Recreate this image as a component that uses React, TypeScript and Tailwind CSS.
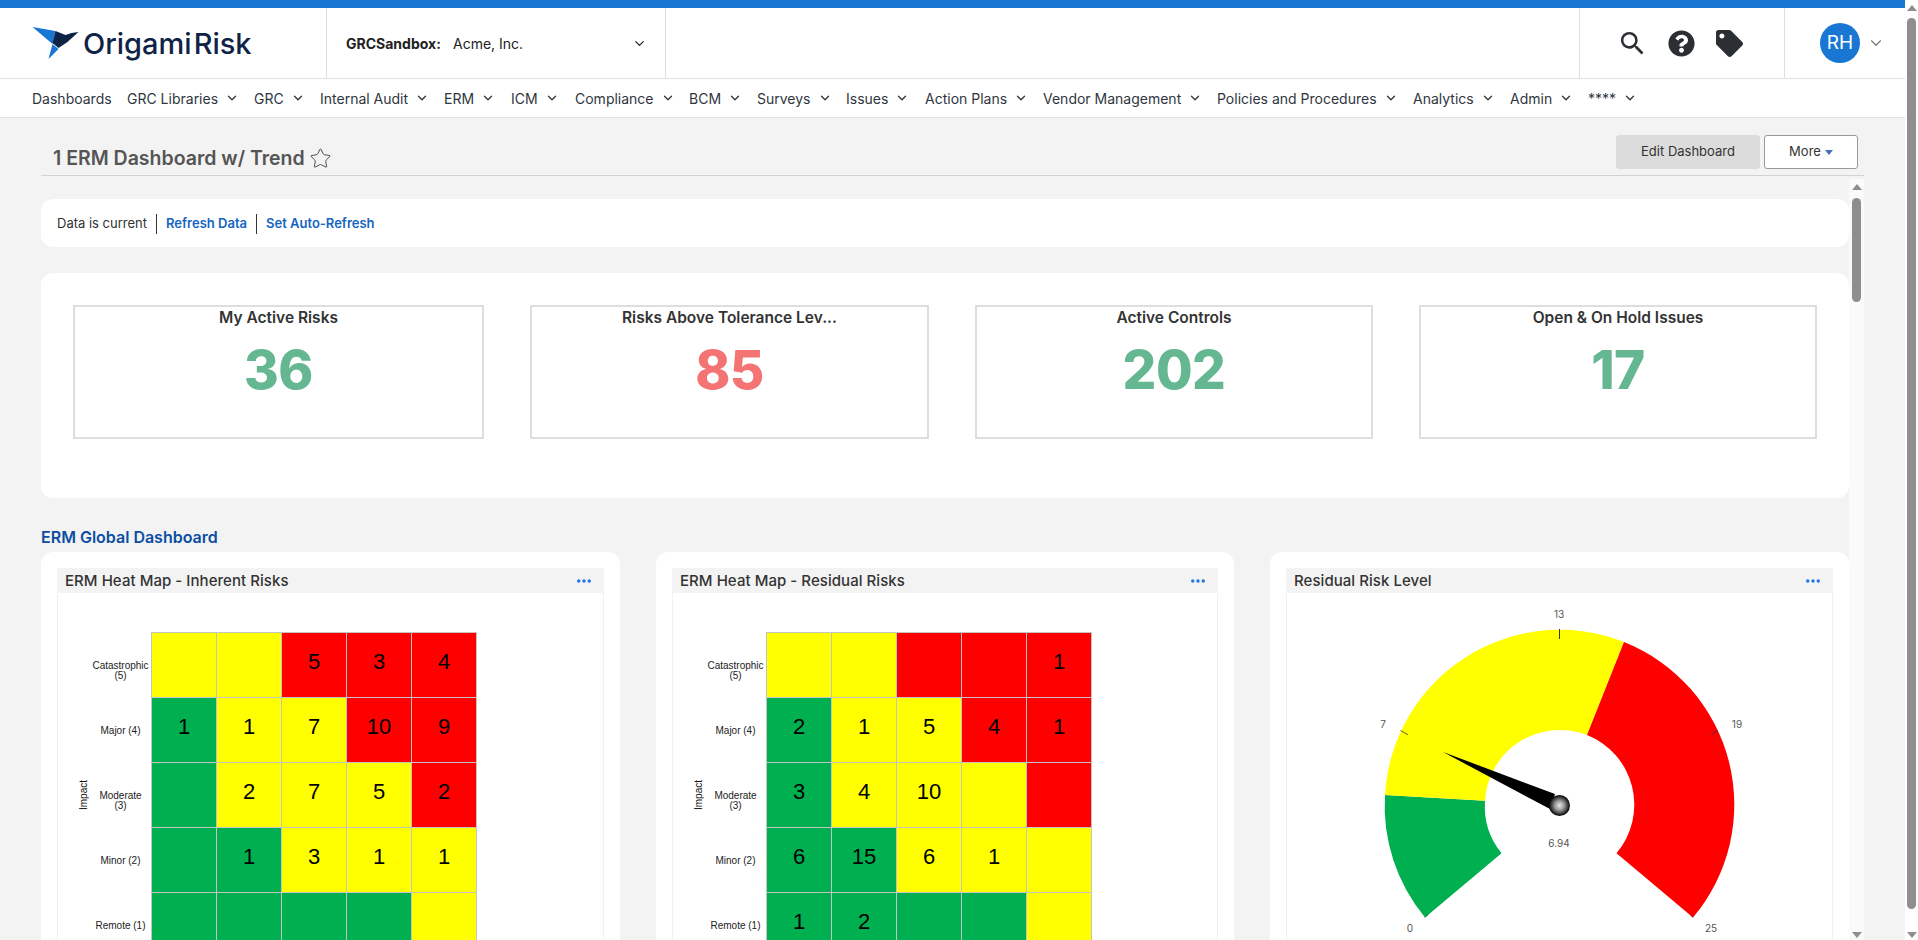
import React from 'react';
import { ChevronDown, Ellipsis, Star } from 'lucide-react';
import { FaQuestionCircle, FaTag } from 'react-icons/fa';
import { MdSearch } from 'react-icons/md';

const FONT = { fontFamily: 'Inter, "Liberation Sans", sans-serif' };
const ARIAL = { fontFamily: '"Liberation Sans", Arial, sans-serif' };

const navItems = [
  { label: 'Dashboards', w: 95, menu: false },
  { label: 'GRC Libraries', w: 127 },
  { label: 'GRC', w: 66 },
  { label: 'Internal Audit', w: 124 },
  { label: 'ERM', w: 67 },
  { label: 'ICM', w: 64 },
  { label: 'Compliance', w: 114 },
  { label: 'BCM', w: 68 },
  { label: 'Surveys', w: 89 },
  { label: 'Issues', w: 79 },
  { label: 'Action Plans', w: 118 },
  { label: 'Vendor Management', w: 174 },
  { label: 'Policies and Procedures', w: 196 },
  { label: 'Analytics', w: 97 },
  { label: 'Admin', w: 78 },
  { label: '****', w: 60 },
];

const kpis = [
  { title: 'My Active Risks', value: '36', color: 'text-[#64b791]' },
  { title: 'Risks Above Tolerance Lev...', value: '85', color: 'text-[#f47474]' },
  { title: 'Active Controls', value: '202', color: 'text-[#64b791]' },
  { title: 'Open & On Hold Issues', value: '17', color: 'text-[#64b791]' },
];

const rowLabels = [
  ['Catastrophic', '(5)'],
  ['Major (4)'],
  ['Moderate', '(3)'],
  ['Minor (2)'],
  ['Remote (1)'],
];

const cellColors = [
  ['y', 'y', 'r', 'r', 'r'],
  ['g', 'y', 'y', 'r', 'r'],
  ['g', 'y', 'y', 'y', 'r'],
  ['g', 'g', 'y', 'y', 'y'],
  ['g', 'g', 'g', 'g', 'y'],
];

const colorClass: Record<string, string> = {
  y: 'bg-[#ffff00]',
  r: 'bg-[#ff0000]',
  g: 'bg-[#00b050]',
};

const inherent = [
  ['', '', '5', '3', '4'],
  ['1', '1', '7', '10', '9'],
  ['', '2', '7', '5', '2'],
  ['', '1', '3', '1', '1'],
  ['', '', '', '', ''],
];

const residual = [
  ['', '', '', '', '1'],
  ['2', '1', '5', '4', '1'],
  ['3', '4', '10', '', ''],
  ['6', '15', '6', '1', ''],
  ['1', '2', '', '', ''],
];

const Arrow = ({ down }: { down?: boolean }) => (
  <svg width="10" height="6" viewBox="0 0 10 6" className="block shrink-0">
    <polygon points={down ? '0,0 10,0 5,6' : '0,6 10,6 5,0'} fill="#8e8e8e" />
  </svg>
);

const Logo = () => (
  <div className="flex items-center">
    <svg width="48" height="32" viewBox="32 27 47 32" className="shrink-0">
      <polygon points="32,27 55,31 52,44" fill="#1976d2" />
      <polygon points="52,44 58,49 48,59" fill="#1976d2" />
      <polygon points="55,31 65,35 71,33 78,32 67,42 58,48 52,43" fill="#0f2346" />
    </svg>
    <span className="ml-[3px] text-[29px] font-medium leading-none text-[#0f2346]">
      Origami<span className="ml-[2px]">Risk</span>
    </span>
  </div>
);

const Header = () => (
  <div className="flex h-[71px] shrink-0 border-b border-[#e2e2e2] bg-white">
    <div className="flex w-[327px] items-center border-r border-[#dedede] pl-[32px]">
      <Logo />
    </div>
    <div className="flex w-[339px] items-center border-r border-[#dedede] pl-[19px] text-[14px] text-[#222]">
      <span className="w-[107px] font-bold">GRCSandbox:</span>
      <span>Acme, Inc.</span>
      <ChevronDown size={15} className="ml-auto mr-[18px]" />
    </div>
    <div className="flex-1" />
    <div className="flex w-[206px] items-center border-l border-r border-[#dedede] pl-[37px] text-[#2b2e33]">
      <MdSearch size={31} />
      <FaQuestionCircle size={27} className="ml-[20px]" />
      <FaTag size={27} className="ml-[21px]" />
    </div>
    <div className="flex w-[120px] items-center pl-[35px]">
      <div className="flex h-[40px] w-[40px] items-center justify-center rounded-full bg-[#1976d2] text-[19px] text-white">
        RH
      </div>
      <ChevronDown size={18} strokeWidth={1.5} className="ml-[7px] text-[#777]" />
    </div>
  </div>
);

const Nav = () => (
  <div className="flex h-[39px] shrink-0 items-center border-b border-[#e2e2e2] bg-white pl-[32px] text-[14px] text-[#2f3640]">
    {navItems.map((item) => (
      <div key={item.label} className="flex shrink-0 items-center" style={{ width: item.w }}>
        <span>{item.label}</span>
        {item.menu !== false && <ChevronDown size={14} strokeWidth={2.2} className="ml-[7px] text-[#333]" />}
      </div>
    ))}
  </div>
);

const TitleRow = () => (
  <div className="ml-[41px] mr-[41px] flex h-[58px] shrink-0 justify-between border-b border-[#d2d2d2] pl-[12px] pr-[6px]">
    <div className="flex items-start pt-[27px]">
      <span className="text-[19.5px] font-semibold leading-[26px] text-[#555]">1 ERM Dashboard w/ Trend</span>
      <Star size={23} strokeWidth={1} className="ml-[4px] mt-[2px] text-[#444]" />
    </div>
    <div className="flex items-start gap-[4px] pt-[17px] text-[13px] text-[#333]">
      <button className="h-[34px] w-[144px] rounded-[3px] bg-[#dcdcdc]">Edit Dashboard</button>
      <button className="flex h-[34px] w-[94px] items-center justify-center gap-[4px] rounded-[3px] border border-[#999] bg-white">
        More
        <svg width="8" height="5" viewBox="0 0 8 5">
          <polygon points="0,0 8,0 4,5" fill="#3f73b5" />
        </svg>
      </button>
    </div>
  </div>
);

const StatusCard = () => (
  <div className="flex h-[48px] items-center rounded-xl bg-white pl-[16px] pt-[2px] text-[13px]">
    <span className="text-[#333]">Data is current</span>
    <span className="mx-[9px] h-[20px] w-px bg-[#333]" />
    <span className="font-semibold text-[#1565c0]">Refresh Data</span>
    <span className="mx-[9px] h-[20px] w-px bg-[#333]" />
    <span className="font-semibold text-[#1565c0]">Set Auto-Refresh</span>
  </div>
);

const KpiCard = () => (
  <div className="mt-[26px] h-[225px] rounded-xl bg-white pl-[32px] pt-[32px]">
    <div className="grid grid-cols-[411px_399px_398px_398px] gap-[46px]">
      {kpis.map((k) => (
        <div key={k.title} className="h-[134px] border-2 border-[#dedede] text-center">
          <div className="pt-[1px] text-[15.5px] font-semibold leading-[20px] text-[#333]">{k.title}</div>
          <div className={`mt-[7px] text-[53px] font-extrabold leading-[70px] tracking-[-0.5px] ${k.color}`}>{k.value}</div>
        </div>
      ))}
    </div>
  </div>
);

const Panel = ({ title, children }: { title: string; children: React.ReactNode }) => (
  <div className="h-[500px] rounded-xl bg-white px-[16px] pt-[16px]">
    <div className="flex h-[25px] items-center justify-between bg-[#f3f3f3] pl-[8px] pr-[11px] pt-[1px]">
      <span className="text-[15px] font-medium tracking-[0.05px] text-[#333]">{title}</span>
      <Ellipsis size={18} strokeWidth={2.6} className="text-[#1a73e8]" />
    </div>
    <div className="h-[460px] border-x border-[#f0f0f0]">{children}</div>
  </div>
);

const HeatMap = ({ data }: { data: string[][] }) => (
  <div className="flex pl-[20px] pt-[39px]" style={ARIAL}>
    <div className="flex w-[12px] items-center justify-center">
      <span className="rotate-180 text-[10px] leading-[12px] text-[#111] [writing-mode:vertical-rl]">Impact</span>
    </div>
    <div className="w-[61px]">
      {rowLabels.map((lines) => (
        <div key={lines[0]} className="flex h-[65px] flex-col items-center pt-[29px] text-[10px] leading-[10px] text-[#222]">
          {lines.map((l) => (
            <span key={l}>{l}</span>
          ))}
        </div>
      ))}
    </div>
    <div className="grid grid-cols-[repeat(5,65px)] border-l border-t border-[#c4c4c4]">
      {data.map((row, r) =>
        row.map((v, c) => (
          <div
            key={`${r}-${c}`}
            className={`flex h-[65px] items-center justify-center border-b border-r border-[#c4c4c4] pb-[7px] text-[22px] text-black ${colorClass[cellColors[r][c]]}`}
          >
            {v}
          </div>
        )),
      )}
    </div>
  </div>
);

const Gauge = () => (
  <svg width="545" height="347" viewBox="1287 593 545 347" className="block">
    <defs>
      <radialGradient id="hub">
        <stop offset="0%" stopColor="#e8e8e8" />
        <stop offset="45%" stopColor="#999" />
        <stop offset="100%" stopColor="#000" />
      </radialGradient>
    </defs>
    <path d="M1425 917.5 A175 175 0 0 1 1385 795 L1485 800.7 A75 75 0 0 0 1501.5 853.2 Z" fill="#00b050" />
    <path d="M1385 795 A175 175 0 0 1 1624 642 L1587 735 A75 75 0 0 0 1485 800.7 Z" fill="#ffff00" />
    <path d="M1624 642 A175 175 0 0 1 1693 917.5 L1616.5 853.2 A75 75 0 0 0 1587 735 Z" fill="#ff0000" />
    <g stroke="#333" strokeWidth="0.8">
      <line x1="1559.5" y1="629" x2="1559.5" y2="639" stroke="#000" />
      <line x1="1400.5" y1="730.5" x2="1408" y2="734.7" />
      <line x1="1718" y1="730.5" x2="1711" y2="734.7" />
      <line x1="1425" y1="917.5" x2="1428" y2="914.5" />
      <line x1="1693" y1="917.5" x2="1690" y2="914.5" />
    </g>
    <polygon points="1443,752 1555,794 1550,809" fill="#000" />
    <circle cx="1559.5" cy="805.5" r="10.5" fill="url(#hub)" />
    <g fontSize="10" fill="#555" textAnchor="middle" style={FONT}>
      <text x="1559" y="618">13</text>
      <text x="1383" y="728">7</text>
      <text x="1737" y="728">19</text>
      <text x="1410" y="932">0</text>
      <text x="1711" y="932">25</text>
      <text x="1559" y="847">6.94</text>
    </g>
  </svg>
);

const InnerScroll = () => (
  <div className="flex w-[15px] shrink-0 flex-col items-center bg-[#fafafa] pt-[5px]">
    <Arrow />
    <div className="mt-[8px] h-[104px] w-[9px] rounded-full bg-[#8e8e8e]" />
    <div className="mt-auto pb-[2px]">
      <Arrow down />
    </div>
  </div>
);

const PageScroll = () => (
  <div className="flex w-[13px] shrink-0 flex-col items-center bg-white pt-[5px]">
    <Arrow />
    <div className="mt-[7px] h-[891px] w-[9px] rounded-full bg-[#8e8e8e]" />
    <div className="mt-auto pb-[2px]">
      <Arrow down />
    </div>
  </div>
);

export default function App() {
  return (
    <div className="flex h-[940px] w-[1918px] overflow-hidden bg-white" style={FONT}>
      <div className="flex min-w-0 flex-1 flex-col">
        <div className="h-[8px] shrink-0 bg-[#1976d2]" />
        <Header />
        <Nav />
        <div className="flex min-h-0 flex-1 flex-col bg-[#f3f3f3]">
          <TitleRow />
          <div className="flex min-h-0 flex-1 pl-[41px] pr-[41px] pt-[3px]">
            <div className="min-w-0 flex-1 overflow-hidden pt-[20px]">
              <StatusCard />
              <KpiCard />
              <div className="mb-[5px] mt-[29px] text-[16px] font-semibold leading-[20px] text-[#0b4ea2]">
                ERM Global Dashboard
              </div>
              <div className="grid grid-cols-[579px_578px_579px] gap-[36px]">
                <Panel title="ERM Heat Map - Inherent Risks">
                  <HeatMap data={inherent} />
                </Panel>
                <Panel title="ERM Heat Map - Residual Risks">
                  <HeatMap data={residual} />
                </Panel>
                <Panel title="Residual Risk Level">
                  <Gauge />
                </Panel>
              </div>
            </div>
            <InnerScroll />
          </div>
        </div>
      </div>
      <PageScroll />
    </div>
  );
}
